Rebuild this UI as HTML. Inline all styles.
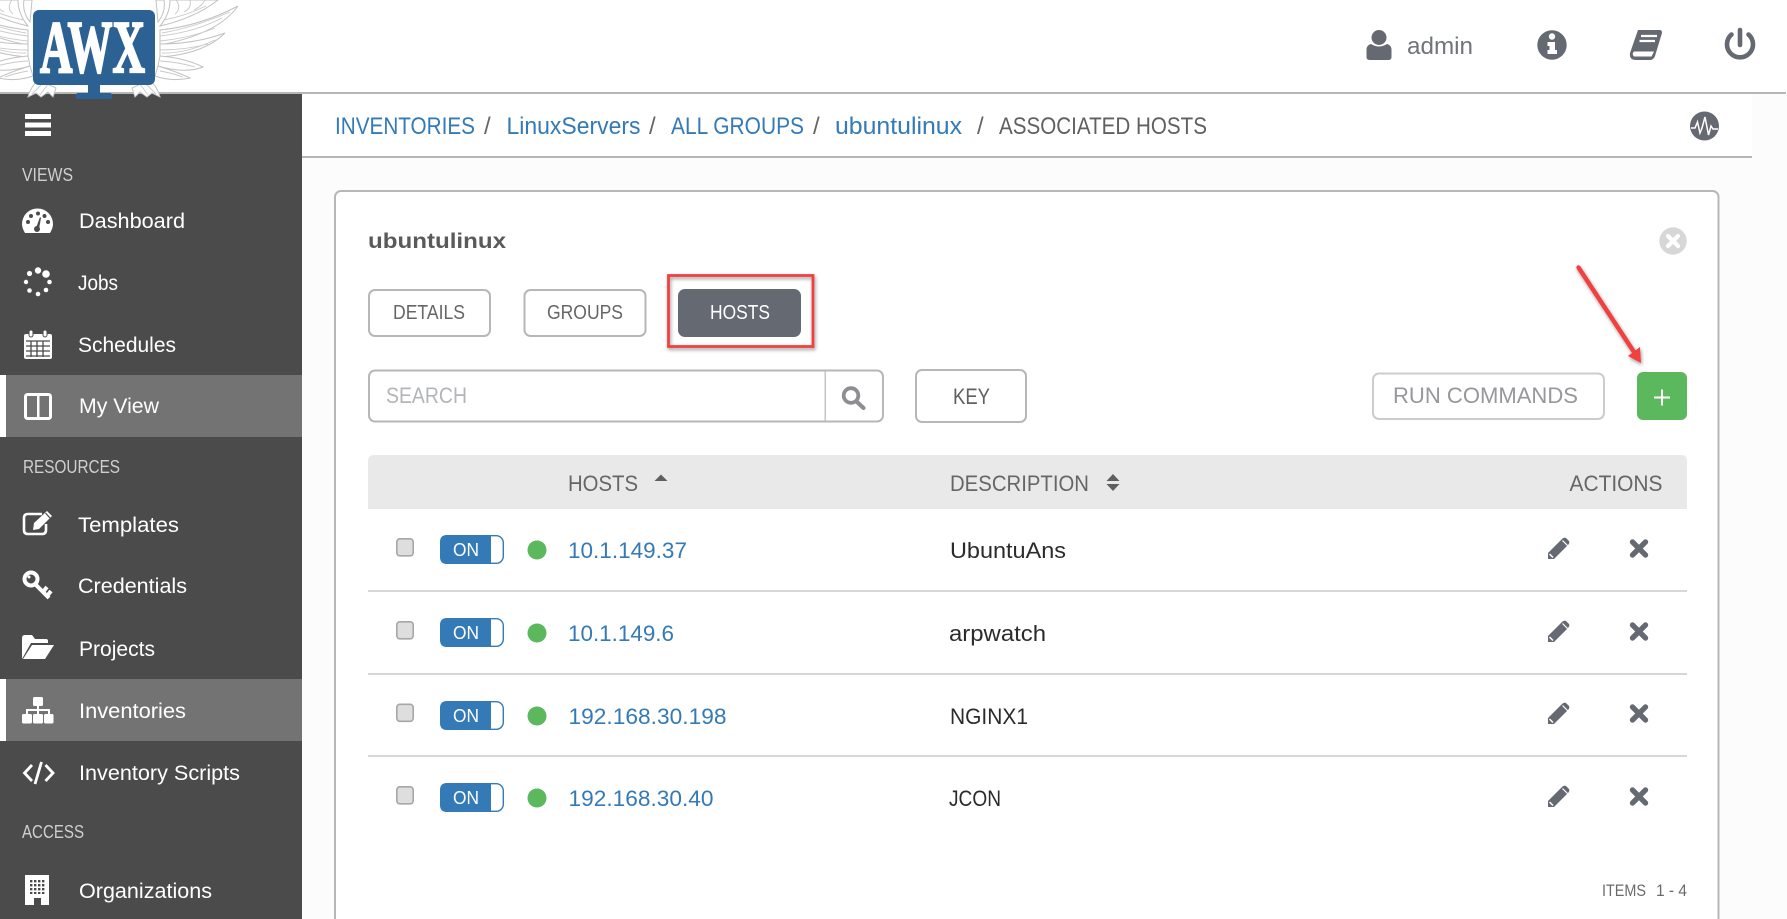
<!DOCTYPE html>
<html><head><meta charset="utf-8"><title>AWX</title>
<style>
html,body{margin:0;padding:0;background:#fff;width:1787px;height:919px;overflow:hidden}
svg{display:block}
text{font-family:"Liberation Sans",sans-serif}
.n{font-size:21px;fill:#fff}
.s{font-size:18.5px;fill:#cfcfcf}
.b{font-size:24px;fill:#337ab7}
.t{font-size:20px;fill:#666}
.h{font-size:22px;fill:#666}
.l{font-size:22.5px;fill:#337ab7}
.d{font-size:22.5px;fill:#2b2b2b}
.i{fill:#646972}
</style></head><body>
<svg width="1787" height="919" viewBox="0 0 1787 919" xmlns="http://www.w3.org/2000/svg">
<defs>
<pattern id="g" width="4" height="4" patternUnits="userSpaceOnUse" x="30" y="880"><rect x="0" y="0" width="2.4" height="2.4" fill="#4b4b4b"/></pattern>
<g id="pen"><path d="M0 22V16L14 2Q16 0 18 1L21 4Q22 6 20 8L6 22Z" fill="#646972"/><path d="M14.5 3.5L20 9" stroke="#fff" stroke-width="1.2"/><path d="M1.5 17L5 20.5" stroke="#fff" stroke-width="1.5"/></g>
<g id="ex"><path d="M-6.5 -6.5L6.5 6.5M6.5 -6.5L-6.5 6.5" stroke="#646972" stroke-width="5.4" stroke-linecap="round"/></g>
<g id="tog"><rect x="0.7" y="0.7" width="62.6" height="27.6" rx="7" fill="#fff" stroke="#337ab7" stroke-width="1.4"/><path d="M7 0H51V29H7Q0 29 0 22V7Q0 0 7 0Z" fill="#337ab7"/><text x="13" y="21" font-size="18" fill="#fff" textLength="26" lengthAdjust="spacingAndGlyphs">ON</text></g>
<g id="cb"><rect x="0.8" y="0.8" width="16.4" height="17" rx="3" fill="#dedede" stroke="#a8a5ab" stroke-width="1.6"/></g>
<g id="wing">
<g fill="#fff" stroke="#c2c2c2" stroke-width="1">
<path d="M156 0H164Q166 12 158 22Z"/>
<path d="M170 0H218Q195 18 160 26Q170 14 170 0Z"/>
<path d="M160 30Q200 26 238 6Q218 34 160 45Z"/>
<path d="M160 44Q195 44 225 33Q204 54 160 57Z"/>
<path d="M160 56Q185 58 203 67Q185 74 158 66Z"/>
<path d="M158 66Q175 71 190 78Q172 82 155 76Z"/>
<path d="M150 80Q158 88 160 97L152 93L147 97L140 92L135 97L132 88Z"/>
</g>
<path d="M160 36Q195 32 222 18M160 41Q190 38 215 28M162 33Q192 28 230 12M160 50Q185 50 208 44M162 53Q185 54 215 40M160 61Q178 62 195 67M160 71Q172 73 183 77M176 0Q182 8 175 14M190 0Q192 8 184 12M205 0Q202 6 194 10M164 20Q185 16 206 6M140 84L148 95M146 84L156 94" fill="none" stroke="#c9c9c9" stroke-width="0.9"/>
</g>
<filter id="sh" x="-30%" y="-30%" width="160%" height="160%"><feDropShadow dx="1" dy="2" stdDeviation="1.8" flood-color="#000" flood-opacity=".4"/></filter>
</defs>

<!-- backgrounds -->
<rect width="1787" height="919" fill="#fff"/>
<rect x="302" y="158" width="1485" height="761" fill="#fcfcfc"/>
<rect x="1752" y="94" width="35" height="70" fill="#fcfcfc"/>
<rect x="0" y="92" width="1786" height="2" fill="#b7b7b7"/>
<rect x="302" y="156" width="1450" height="2" fill="#b7b7b7"/>
<rect x="0" y="94" width="302" height="825" fill="#4b4b4b"/>
<rect x="0" y="375" width="302" height="62" fill="#737373"/><rect x="0" y="375" width="6" height="62" fill="#fff"/>
<rect x="0" y="679" width="302" height="62" fill="#737373"/><rect x="0" y="679" width="6" height="62" fill="#fff"/>

<!-- wings -->
<use href="#wing"/>
<use href="#wing" transform="matrix(-1 0 0 1 188 0)"/>
<!-- logo -->
<rect x="33" y="10" width="122" height="75" rx="6" fill="#2c6193"/>
<rect x="88" y="84" width="12" height="11" fill="#2c6193"/>
<rect x="76" y="93" width="36" height="6" rx="2" fill="#2c6193"/>
<text x="40" y="72" font-size="74" font-weight="700" fill="#fff" stroke="#fff" stroke-width="2.2" textLength="105" lengthAdjust="spacingAndGlyphs" style="font-family:'Liberation Serif',serif">AWX</text>

<!-- sidebar -->
<rect x="25" y="114" width="26" height="5" fill="#fff"/><rect x="25" y="122.500" width="26" height="5" fill="#fff"/><rect x="25" y="131" width="26" height="5" fill="#fff"/>
<text class="s" x="22" y="181" textLength="51" lengthAdjust="spacingAndGlyphs">VIEWS</text>
<text class="n" x="79" y="228" textLength="106" lengthAdjust="spacingAndGlyphs">Dashboard</text>
<text class="n" x="78" y="290" textLength="40" lengthAdjust="spacingAndGlyphs">Jobs</text>
<text class="n" x="78" y="352" textLength="98" lengthAdjust="spacingAndGlyphs">Schedules</text>
<text class="n" x="79" y="413" textLength="80" lengthAdjust="spacingAndGlyphs">My View</text>
<text class="s" x="23" y="473" textLength="97" lengthAdjust="spacingAndGlyphs">RESOURCES</text>
<text class="n" x="78" y="532" textLength="101" lengthAdjust="spacingAndGlyphs">Templates</text>
<text class="n" x="78" y="593" textLength="109" lengthAdjust="spacingAndGlyphs">Credentials</text>
<text class="n" x="79" y="656" textLength="76" lengthAdjust="spacingAndGlyphs">Projects</text>
<text class="n" x="79" y="718" textLength="107" lengthAdjust="spacingAndGlyphs">Inventories</text>
<text class="n" x="79" y="780" textLength="161" lengthAdjust="spacingAndGlyphs">Inventory Scripts</text>
<text class="s" x="22" y="838" textLength="62" lengthAdjust="spacingAndGlyphs">ACCESS</text>
<text class="n" x="79" y="898" textLength="133" lengthAdjust="spacingAndGlyphs">Organizations</text>

<!-- sidebar icons -->
<path d="M25 233Q22 228 22 224A15.500 15.500 0 0 1 53 224Q53 228 50 233Z" fill="#fff"/>
<g fill="#4b4b4b"><circle cx="28" cy="222" r="2"/><circle cx="31" cy="216" r="2"/><circle cx="38" cy="213.500" r="2"/><circle cx="44.500" cy="216" r="2"/><circle cx="48" cy="222" r="2"/><circle cx="37" cy="229" r="3"/><path d="M36 228L40 217L41 218L39 229Z"/></g>
<g fill="#fff"><circle cx="46" cy="274" r="3.800"/><circle cx="38" cy="270.500" r="3.200"/><circle cx="29.500" cy="273.500" r="2.600"/><circle cx="26" cy="282" r="2.200"/><circle cx="29.500" cy="290.500" r="2.300"/><circle cx="38" cy="294" r="2.300"/><circle cx="46" cy="290" r="2.300"/><circle cx="49.500" cy="282" r="2.300"/></g>
<rect x="24" y="334" width="28" height="25" rx="2" fill="#fff"/>
<rect x="29" y="330" width="4" height="7" rx="2" fill="#fff" stroke="#4b4b4b" stroke-width="1"/><rect x="43" y="330" width="4" height="7" rx="2" fill="#fff" stroke="#4b4b4b" stroke-width="1"/>
<path d="M26 341H50M26 346H50M26 351H50M26 356H50M31 341V357M37 341V357M43 341V357" stroke="#4b4b4b" stroke-width="1.300" fill="none"/>
<rect x="25.500" y="394.500" width="25" height="24" rx="2" fill="none" stroke="#fff" stroke-width="3"/><rect x="37" y="394" width="2.500" height="25" fill="#fff"/>
<path d="M42 514H28Q24 514 24 518V530Q24 534 28 534H42Q46 534 46 530V524" fill="none" stroke="#fff" stroke-width="2.600"/>
<path d="M33 530L34 523L47 511L52 516L39 529Z" fill="#fff"/><path d="M45.500 513L50 518" stroke="#4b4b4b" stroke-width="1.200"/>
<circle cx="31" cy="579" r="6.500" fill="none" stroke="#fff" stroke-width="4"/><circle cx="29" cy="577" r="1.500" fill="#fff"/>
<path d="M35 584L49 598M43 592L47 587M47 596L51 591" stroke="#fff" stroke-width="4" fill="none"/>
<path d="M22 659V638Q22 635 25 635H32L35 639H46Q48 639 48 641V643H31Z" fill="#fff"/>
<path d="M23 659L32 645H54L45 659Z" fill="#fff"/>
<rect x="33" y="697" width="10" height="9" rx="1.500" fill="#fff"/><rect x="22" y="714" width="10" height="9.500" rx="1.500" fill="#fff"/><rect x="33" y="714" width="10" height="9.500" rx="1.500" fill="#fff"/><rect x="44" y="714" width="9.500" height="9.500" rx="1.500" fill="#fff"/>
<path d="M38 706V714M27 714V710H49V714" fill="none" stroke="#fff" stroke-width="2"/>
<path d="M32 765L24.500 773L32 781M45.500 765L53 773L45.500 781M41.500 762L35 784" fill="none" stroke="#fff" stroke-width="2.800"/>
<rect x="25" y="875" width="24" height="30" fill="#fff"/>
<rect x="30" y="880" width="15" height="14" fill="url(#g)"/><rect x="34" y="898" width="7" height="7" fill="#4b4b4b"/>

<!-- top right -->
<circle cx="1379" cy="37.500" r="7.500" class="i"/><path d="M1366.500 57V50Q1366.500 45 1371 44Q1379 49 1387 44Q1391.500 45 1391.500 50V57Q1391.500 60 1388 60H1370Q1366.500 60 1366.500 57Z" class="i"/>
<text x="1407" y="54" font-size="24" fill="#707479" textLength="66" lengthAdjust="spacingAndGlyphs">admin</text>
<circle cx="1552" cy="45" r="14.700" class="i"/><circle cx="1552" cy="36.500" r="3.200" fill="#fff"/><path d="M1547.500 42H1555V50H1557V54H1547.500V50H1549.500V46H1547.500Z" fill="#fff"/>
<path d="M1638 30H1660Q1662 30 1662 33L1655 56Q1654 59 1651 60H1636Q1629 60 1630 53Z" class="i"/>
<path d="M1634 51.500H1654L1651.500 56.500H1634Q1631.500 54 1634 51.500Z" fill="#fff"/><path d="M1641 36H1657M1639.500 41H1655" stroke="#fff" stroke-width="2.200"/>
<path d="M1731.500 34.500A13 13 0 1 0 1748.500 34.500" fill="none" stroke="#646972" stroke-width="4.600" stroke-linecap="round"/><path d="M1740 30V45" stroke="#646972" stroke-width="4.600" stroke-linecap="round"/>
<circle cx="1704.500" cy="126" r="14.500" class="i"/>
<path d="M1691 128H1695L1697.500 122L1700 133L1702 128L1705 117L1708.500 135L1711 126L1713 129H1718" fill="none" stroke="#fff" stroke-width="1.500"/>

<!-- breadcrumb -->
<text class="b" x="335" y="134" textLength="140" lengthAdjust="spacingAndGlyphs">INVENTORIES</text>
<text x="484" y="134" font-size="24" fill="#666">/</text>
<text class="b" x="506.500" y="134" textLength="134" lengthAdjust="spacingAndGlyphs">LinuxServers</text>
<text x="649" y="134" font-size="24" fill="#666">/</text>
<text class="b" x="671" y="134" textLength="133" lengthAdjust="spacingAndGlyphs">ALL GROUPS</text>
<text x="813" y="134" font-size="24" fill="#666">/</text>
<text class="b" x="835" y="134" textLength="127" lengthAdjust="spacingAndGlyphs">ubuntulinux</text>
<text x="977" y="134" font-size="24" fill="#666">/</text>
<text x="999" y="134" font-size="24" fill="#606060" textLength="208" lengthAdjust="spacingAndGlyphs">ASSOCIATED HOSTS</text>

<!-- panel -->
<rect x="335" y="191" width="1383.500" height="760" rx="6" fill="#fff" stroke="#b7b7b7" stroke-width="2"/>
<text x="368" y="248" font-size="21.500" font-weight="700" fill="#5a5a5a" textLength="138" lengthAdjust="spacingAndGlyphs">ubuntulinux</text>
<circle cx="1673" cy="241" r="13.700" fill="#d7d7d7"/><path d="M1668 236L1678 246M1678 236L1668 246" stroke="#fff" stroke-width="4.200" stroke-linecap="round"/>

<!-- tabs -->
<rect x="369" y="290" width="121" height="46" rx="6" fill="#fff" stroke="#b7b7b7" stroke-width="2"/>
<text class="t" x="393" y="319" textLength="72" lengthAdjust="spacingAndGlyphs">DETAILS</text>
<rect x="524.500" y="290" width="121" height="46" rx="6" fill="#fff" stroke="#b7b7b7" stroke-width="2"/>
<text class="t" x="547" y="319" textLength="76" lengthAdjust="spacingAndGlyphs">GROUPS</text>
<rect x="678" y="289" width="123" height="48" rx="7" fill="#646972"/>
<text x="710" y="319" font-size="20" fill="#fff" textLength="60" lengthAdjust="spacingAndGlyphs">HOSTS</text>
<rect x="668.500" y="275.500" width="144.500" height="71" fill="none" stroke="#f04141" stroke-width="2.800" filter="url(#sh)"/>

<!-- search row -->
<rect x="369" y="370.500" width="514" height="51" rx="6" fill="#fff" stroke="#b7b7b7" stroke-width="2"/>
<rect x="824.500" y="371" width="1.500" height="50" fill="#c4c4c4"/>
<text x="386" y="403" font-size="22" fill="#b3b5b8" textLength="81" lengthAdjust="spacingAndGlyphs">SEARCH</text>
<circle cx="851" cy="395.500" r="7.300" fill="none" stroke="#8e8e92" stroke-width="3.800"/><path d="M856.500 401.500L863.500 408" stroke="#8e8e92" stroke-width="4.200" stroke-linecap="round"/>
<rect x="916" y="370" width="110" height="52" rx="6" fill="#fff" stroke="#b7b7b7" stroke-width="2"/>
<text x="953" y="404" font-size="22" fill="#606060" textLength="37" lengthAdjust="spacingAndGlyphs">KEY</text>
<rect x="1373" y="373.500" width="231" height="45.500" rx="6" fill="#fff" stroke="#ccc" stroke-width="2"/>
<text x="1393" y="403" font-size="22.500" fill="#97979c" textLength="185" lengthAdjust="spacingAndGlyphs">RUN COMMANDS</text>
<rect x="1637" y="372" width="50" height="48" rx="6" fill="#5cb85c"/>
<path d="M1654 397.500H1670M1662 389.500V405.500" stroke="#fff" stroke-width="2"/>
<g filter="url(#sh)"><path d="M1578.500 267.500L1634 352" stroke="#f04141" stroke-width="4.400" stroke-linecap="round" fill="none"/><path d="M1641 363L1628 356L1640 347Z" fill="#f04141"/></g>

<!-- table header -->
<path d="M368 509V461Q368 455 374 455H1681Q1687 455 1687 461V509Z" fill="#e9e9e9"/>
<text class="h" x="568" y="491" textLength="70" lengthAdjust="spacingAndGlyphs">HOSTS</text>
<path d="M654.500 481L661 474.500L667.500 481Z" fill="#5f5f5f"/>
<text class="h" x="950" y="491" textLength="139" lengthAdjust="spacingAndGlyphs">DESCRIPTION</text>
<path d="M1106.500 481L1113 474L1119.500 481ZM1106.500 484L1113 491L1119.500 484Z" fill="#5f5f5f"/>
<text class="h" x="1569.500" y="491" textLength="93" lengthAdjust="spacingAndGlyphs">ACTIONS</text>

<!-- rows -->
<rect x="368" y="590" width="1319" height="2" fill="#d7d7d7"/>
<rect x="368" y="673" width="1319" height="2" fill="#d7d7d7"/>
<rect x="368" y="755" width="1319" height="2" fill="#d7d7d7"/>

<use href="#cb" x="396" y="538"/><use href="#tog" x="440" y="535"/><circle cx="537" cy="550" r="9.500" fill="#5cb85c"/>
<text class="l" x="568" y="558" textLength="119" lengthAdjust="spacingAndGlyphs">10.1.149.37</text>
<text class="d" x="950" y="558" textLength="116" lengthAdjust="spacingAndGlyphs">UbuntuAns</text>
<use href="#pen" x="1548" y="537"/><use href="#ex" x="1639" y="548.500"/>

<use href="#cb" x="396" y="621"/><use href="#tog" x="440" y="618"/><circle cx="537" cy="633" r="9.500" fill="#5cb85c"/>
<text class="l" x="568" y="641" textLength="106" lengthAdjust="spacingAndGlyphs">10.1.149.6</text>
<text class="d" x="949" y="641" textLength="97" lengthAdjust="spacingAndGlyphs">arpwatch</text>
<use href="#pen" x="1548" y="620"/><use href="#ex" x="1639" y="631.500"/>

<use href="#cb" x="396" y="703.500"/><use href="#tog" x="440" y="701"/><circle cx="537" cy="716" r="9.500" fill="#5cb85c"/>
<text class="l" x="568.500" y="724" textLength="158" lengthAdjust="spacingAndGlyphs">192.168.30.198</text>
<text class="d" x="950" y="724" textLength="78" lengthAdjust="spacingAndGlyphs">NGINX1</text>
<use href="#pen" x="1548" y="702"/><use href="#ex" x="1639" y="713.500"/>

<use href="#cb" x="396" y="786"/><use href="#tog" x="440" y="783"/><circle cx="537" cy="798" r="9.500" fill="#5cb85c"/>
<text class="l" x="568.500" y="806" textLength="145" lengthAdjust="spacingAndGlyphs">192.168.30.40</text>
<text class="d" x="949" y="806" textLength="52" lengthAdjust="spacingAndGlyphs">JCON</text>
<use href="#pen" x="1548" y="785"/><use href="#ex" x="1639" y="796.500"/>

<text x="1602" y="896" font-size="17" fill="#6a6a6a" textLength="44" lengthAdjust="spacingAndGlyphs">ITEMS</text>
<text x="1656" y="896" font-size="17" fill="#6a6a6a" textLength="31" lengthAdjust="spacingAndGlyphs">1 - 4</text>
</svg>
</body></html>
